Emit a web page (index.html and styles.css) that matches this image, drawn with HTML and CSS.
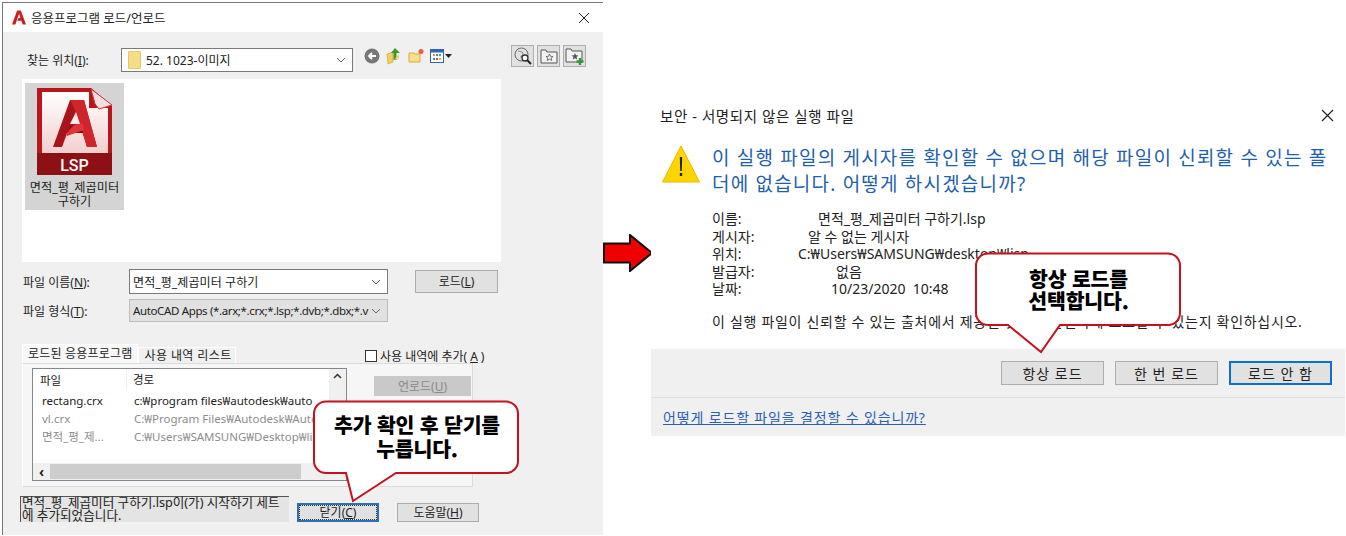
FILE: index.html
```html
<!DOCTYPE html>
<html lang="ko">
<head>
<meta charset="utf-8">
<title>응용프로그램 로드/언로드</title>
<link rel="stylesheet" href="styles.css">
</head>
<body>
<main class="canvas">
  <section class="win-left">
    <header class="titlebar">
      <svg class="app-logo" width="14" height="15" viewBox="0 0 15 16"><path d="M0 15.500 5.500 .5h4L15 15.500h-3.600L10 11.500H5.600L7 8.600h2L7.600 4 3.600 15.500z" fill="#c8201e"/></svg>
      <span>응용프로그램 로드/언로드</span>
      <svg class="close" width="12" height="12" viewBox="0 0 12 12"><path d="M1 1l10 10M11 1 1 11" stroke="#222" stroke-width="1" fill="none"/></svg>
    </header>
    <div class="left-body">
      <div class="look-row">
        <label class="look-label">찾는 위치(<u>I</u>):</label>
        <div class="combo look-combo">
          <span class="mini-folder"></span><span>52. 1023-이미지</span>
          <svg class="chev" width="10" height="6" viewBox="0 0 10 6"><path d="M1 1l4 4 4-4" stroke="#666" fill="none"/></svg>
        </div>
        <div class="tools">
          <svg width="16" height="16" viewBox="0 0 16 16"><circle cx="8" cy="8" r="7.500" fill="#777"/><path d="M12 8H6M8 5 5 8l3 3" stroke="#fff" stroke-width="2" fill="none"/></svg>
          <svg width="16" height="18" viewBox="0 0 16 18"><path d="M1 7l6-2v10l-5 2z" fill="#f4cf5c" stroke="#c79a2a" stroke-width=".6"/><path d="M9 1 5 6h2.500v7h3V6H14z" fill="#3b9a2b"/><path d="M8 13l5-2V8l-2 1z" fill="#f4cf5c"/></svg>
          <svg width="16" height="16" viewBox="0 0 16 16"><path d="M1 5h5l1 1h5v8H1z" fill="#fbe08a" stroke="#d9a93b"/><circle cx="13" cy="3.500" r="2.500" fill="#e8622c"/></svg>
          <span class="view-tool">
            <svg width="14" height="14" viewBox="0 0 14 14"><rect x=".5" y=".5" width="13" height="13" fill="#fff" stroke="#2b66b8"/><rect x="1" y="1" width="12" height="2.500" fill="#2b66b8"/><path d="M3 5h2v2H3z" fill="#e2883a"/><path d="M6 5h2v2H6z" fill="#3e7fc8"/><path d="M9 5h2v2H9z" fill="#5aa54a"/><path d="M3 9h2v2H3z" fill="#3e7fc8"/><path d="M6 9h2v2H6z" fill="#d94b3b"/><path d="M9 9h2v2H9z" fill="#e2b83a"/></svg>
            <svg width="7" height="4" viewBox="0 0 7 4"><path d="M0 0h7L3.500 4z" fill="#222"/></svg>
          </span>
        </div>
        <div class="fav-tools">
          <span class="tool-btn"><svg width="18" height="18" viewBox="0 0 18 18"><circle cx="7.500" cy="7.500" r="6.500" fill="#dfe3e6" stroke="#666"/><path d="M4 4c2 1 4 0 5 2s-3 2-2 5" stroke="#888" fill="none"/><circle cx="11" cy="11" r="3" fill="#fff" stroke="#333" stroke-width="1.300"/><path d="M13 13l4 4" stroke="#222" stroke-width="2"/></svg></span>
          <span class="tool-btn"><svg width="18" height="16" viewBox="0 0 18 16"><path d="M1 2h5l1 2h10v11H1z" fill="#f2f2f2" stroke="#555"/><path d="M9.500 6l1 2.300 2.500.2-1.900 1.600.6 2.400-2.200-1.300-2.200 1.300.6-2.400L6 8.500l2.500-.2z" fill="none" stroke="#555" stroke-width=".8"/></svg></span>
          <span class="tool-btn"><svg width="20" height="19" viewBox="0 0 20 19"><path d="M1 2h5l1 2h10v11H1z" fill="#f2f2f2" stroke="#555"/><path d="M10 6l1 2.300 2.500.2-1.900 1.600.6 2.400-2.200-1.300-2.200 1.300.6-2.400-1.900-1.600 2.500-.2z" fill="#556"/><path d="M15 11v7M11.500 14.500h7" stroke="#2f9a35" stroke-width="2.400"/></svg></span>
        </div>
      </div>

      <div class="file-panel">
        <figure class="tile">
          <svg class="lsp" width="75" height="88" viewBox="0 0 75 88">
            <defs><linearGradient id="pg" x1="0" y1="0" x2="0" y2="1"><stop offset="0" stop-color="#fff"/><stop offset="1" stop-color="#f3cfcf"/></linearGradient></defs>
            <path d="M0 0H54L75 18V87H0z" fill="#b8161b"/>
            <path d="M5 4H52V20H71V65H5z" fill="url(#pg)"/>
            <path d="M54 1 58 16 62 21 75 17z" fill="#f6dfe0" stroke="#c5383b"/>
            <path d="M0 65H75V87H0z" fill="#8c1014"/>
            <path d="M16 59 33 12H47L60 59H50L46 45H30L25 59z" fill="#a81419"/>
            <path d="M33 12H47L60 59H50L38 22z" fill="#d0262b"/>
            <path d="M25 59 33 38H44L46 45H30z" fill="#7c0f13"/>
            <path d="M30 45C36 36 42 34 46 36L47 42 30 48z" fill="#e0343a"/>
            <path d="M33 36 39 24 43 36z" fill="#fbeaea"/>
            <text x="37.500" y="83" class="lsp-text" text-anchor="middle">LSP</text>
          </svg>
          <figcaption>면적_평_제곱미터<br>구하기</figcaption>
        </figure>
      </div>

      <div class="form-row name-row">
        <label>파일 이름(<u>N</u>):</label>
        <div class="combo field"><span>면적_평_제곱미터 구하기</span><svg class="chev" width="10" height="6" viewBox="0 0 10 6"><path d="M1 1l4 4 4-4" stroke="#666" fill="none"/></svg></div>
        <button class="btn load-btn">로드(<u>L</u>)</button>
      </div>
      <div class="form-row type-row">
        <label>파일 형식(<u>T</u>):</label>
        <div class="combo field disabled"><span class="type-text">AutoCAD Apps (*.arx;*.crx;*.lsp;*.dvb;*.dbx;*.v</span><svg class="chev" width="10" height="6" viewBox="0 0 10 6"><path d="M1 1l4 4 4-4" stroke="#666" fill="none"/></svg></div>
      </div>

      <div class="loaded-area">
        <div class="tabs-col">
          <div class="tabs">
            <span class="tab active">로드된 응용프로그램</span>
            <span class="tab">사용 내역 리스트</span>
          </div>
          <div class="tab-pane">
            <div class="list">
              <div class="list-main">
                <div class="list-row head"><span class="c1">파일</span><span class="c2">경로</span></div>
                <div class="list-row"><span class="c1">rectang.crx</span><span class="c2">c:₩program files₩autodesk₩auto</span></div>
                <div class="list-row grey"><span class="c1">vl.crx</span><span class="c2">C:₩Program Files₩Autodesk₩AutoCAD</span></div>
                <div class="list-row grey"><span class="c1">면적_평_제...</span><span class="c2">C:₩Users₩SAMSUNG₩Desktop₩lisp</span></div>
                <div class="hscroll"><span class="arrow-l">‹</span><span class="thumb"></span></div>
              </div>
              <div class="vscroll"><svg width="9" height="6" viewBox="0 0 9 6"><path d="M1 5l3.500-3.500L8 5" stroke="#333" stroke-width="1.500" fill="none"/></svg></div>
            </div>
          </div>
        </div>
        <div class="side-col">
          <label class="check"><span class="box"></span>사용 내역에 추가(<u>A</u>)</label>
          <button class="btn unload" disabled>언로드(<u>U</u>)</button>
        </div>
      </div>

      <div class="bottom-row">
        <div class="status">면적_평_제곱미터 구하기.lsp이(가) 시작하기 세트<br>에 추가되었습니다.</div>
        <button class="btn close-btn">닫기(<u>C</u>)</button>
        <button class="btn help-btn">도움말(<u>H</u>)</button>
      </div>
    </div>
  </section>

  <svg class="big-arrow" width="50" height="38" viewBox="0 0 50 38"><path d="M1 9.500H27V1L49 19 27 37V28.500H1z" fill="#f00000" stroke="#111" stroke-width="2"/></svg>

  <section class="win-right">
    <header class="r-title">
      <span>보안 - 서명되지 않은 실행 파일</span>
      <svg width="13" height="13" viewBox="0 0 13 13"><path d="M1 1l11 11M12 1 1 12" stroke="#222" stroke-width="1.200" fill="none"/></svg>
    </header>
    <div class="r-main">
      <svg class="warn" width="38" height="38" viewBox="0 0 38 38"><path d="M19 1 37.500 37H.5z" fill="#ffd400" stroke="#e8b800"/><path d="M17.800 12h2.400l-.4 14h-1.600z" fill="#222"/><rect x="17.800" y="28" width="2.400" height="3" fill="#222"/></svg>
      <div class="r-content">
        <h1 class="r-head">이 실행 파일의 게시자를 확인할 수 없으며 해당 파일이 신뢰할 수 있는 폴<br>더에 없습니다. 어떻게 하시겠습니까?</h1>
        <dl class="info">
          <div><dt>이름:</dt><dd class="i1">면적_평_제곱미터 구하기.lsp</dd></div>
          <div><dt>게시자:</dt><dd class="i2">알 수 없는 게시자</dd></div>
          <div><dt>위치:</dt><dd class="i3">C:₩Users₩SAMSUNG₩desktop₩lisp</dd></div>
          <div><dt>발급자:</dt><dd class="i4">없음</dd></div>
          <div><dt>날짜:</dt><dd class="i5">10/23/2020&nbsp;&nbsp;10:48</dd></div>
        </dl>
        <p class="r-note">이 실행 파일이 신뢰할 수 있는 출처에서 제공된 것이며 안전하게 로드할 수 있는지 확인하십시오.</p>
      </div>
    </div>
    <div class="r-actions">
      <button class="btn r-btn">항상 로드</button>
      <button class="btn r-btn">한 번 로드</button>
      <button class="btn r-btn primary">로드 안 함</button>
    </div>
    <div class="r-foot"><a href="#">어떻게 로드할 파일을 결정할 수 있습니까?</a></div>
  </section>

  <div class="callout c-left">
    <svg width="208" height="106" viewBox="0 0 208 106"><path d="M14 1.500H194a12 12 0 0 1 12 12V61a12 12 0 0 1-12 12H84L41 101 34 73H14A12 12 0 0 1 2 61V13.500A12 12 0 0 1 14 1.500z" fill="#fff" stroke="#c8101c" stroke-width="2"/></svg>
    <p>추가 확인 후 닫기를<br>누릅니다.</p>
  </div>
  <div class="callout c-right">
    <svg width="208" height="104" viewBox="0 0 208 104"><path d="M14 1.500H194a12 12 0 0 1 12 12V61a12 12 0 0 1-12 12H86L67 100 34 73H14A12 12 0 0 1 2 61V13.500A12 12 0 0 1 14 1.500z" fill="#fff" stroke="#c8101c" stroke-width="2"/></svg>
    <p>항상 로드를<br>선택합니다.</p>
  </div>
</main>
</body>
</html>
```

FILE: styles.css
```css
* { box-sizing: border-box; }
html, body { margin: 0; padding: 0; background: #fff; }
body {
  width: 1346px;
  height: 536px;
  overflow: hidden;
  font-family: "Noto Sans", "Noto Sans CJK KR", sans-serif;
  font-size: 12px;
  color: #222;
}
.canvas { position: relative; width: 1346px; height: 536px; display: flex; align-items: flex-start; }
u { text-underline-offset: 1px; }
button { font-family: inherit; font-size: 12px; color: #222; padding: 0; }

/* Left dialog */
.win-left {
  flex: none;
  width: 601px;
  height: 533px;
  margin: 2px 0 0 2px;
  border-top: 1px solid #777;
  border-left: 1px solid #777;
  background: #f0f0f0;
}
.titlebar {
  height: 29px;
  background: #fff;
  display: flex;
  align-items: center;
  padding: 0 13px 0 9px;
  gap: 5px;
  font-size: 12.500px;
}
.titlebar .close { margin-left: auto; }
.left-body { padding: 0 0 0 19px; }

.look-row { display: flex; align-items: center; height: 47px; padding-top: 8px; }
.look-label { width: 99px; padding-left: 5px; }
.combo {
  display: flex;
  align-items: center;
  background: #fff;
  border: 1px solid #7a7a7a;
  position: relative;
}
.look-combo { width: 232px; height: 24px; padding-left: 6px; gap: 5px; }
.mini-folder { width: 13px; height: 18px; background: #f6dc84; border: 1px solid #e5c765; border-radius: 1px; }
.chev { position: absolute; right: 6px; top: 50%; margin-top: -3px; }
.tools { display: flex; align-items: center; gap: 6px; margin-left: 11px; width: 147px; margin-top: -7px; }
.view-tool { display: flex; align-items: center; gap: 1px; }
.fav-tools { display: flex; gap: 3px; margin-top: -7px; }
.tool-btn {
  width: 23px; height: 22px;
  background: #e1e1e1;
  border: 1px solid #adadad;
  display: flex; align-items: center; justify-content: center;
}

.file-panel { width: 479px; height: 183px; background: #fff; padding: 4px 3px; }
.tile { margin: 0; width: 99px; height: 127px; background: #d4d4d4; padding-top: 5px; text-align: center; }
.lsp { display: block; margin: 0 auto; }
.lsp-text { font-family: Roboto, "Noto Sans", sans-serif; font-weight: 500; font-size: 16px; fill: #fff; }
.tile figcaption { margin-top: 5px; font-size: 12.200px; line-height: 14px; white-space: nowrap; }

.form-row { display: flex; align-items: center; }
.form-row label { width: 107px; padding-left: 1px; }
.name-row { margin-top: 7px; height: 25px; }
.type-row { margin-top: 5px; height: 23px; }
.field { width: 259px; height: 100%; padding-left: 3px; white-space: nowrap; letter-spacing: .1px; }
.type-text { font-size: 11.500px; letter-spacing: -.36px; }
.field.disabled { background: #e1e1e1; border-color: #bdbdbd; }
.btn { background: #e1e1e1; border: 1px solid #adadad; }
.load-btn { width: 83px; height: 23px; margin-left: 27px; margin-top: -1px; }

.loaded-area { display: flex; margin-top: 22px; }
.tabs-col { width: 451px; }
.tabs { display: flex; height: 19px; align-items: flex-end; }
.tab { height: 16px; padding: 0 3px 0 5px; line-height: 15px; background: #f0f0f0; border: 1px solid #fff; border-bottom: 0; letter-spacing: .4px; }
.tab.active { height: 19px; line-height: 17px; padding: 0 5px; background: #f7f7f7; letter-spacing: .2px; }
.tab-pane { height: 124px; border: 1px solid #dcdcdc; background: #f6f6f6; padding: 4px 0 0 9px; border-left: 1px solid #fff; }
.list { width: 315px; height: 113px; border: 1px solid #828790; background: #fff; display: flex; overflow: hidden; }
.list-main { flex: 1; min-width: 0; position: relative; }
.list-row { display: flex; height: 18px; align-items: center; white-space: nowrap; font-size: 11.500px; }
.list-row.head { height: 22px; }
.c1 { width: 93px; padding-left: 9px; flex: none; }
.head .c1 { padding-left: 7px; }
.c2 { padding-left: 8px; }
.head .c2 { border-left: 1px solid #eee; height: 100%; line-height: 21px; padding-left: 6px; }
.grey { color: #8c8c8c; }
.hscroll { position: absolute; left: 0; right: 0; bottom: 0; height: 17px; background: #f0f0f0; display: flex; align-items: center; }
.arrow-l { width: 17px; text-align: center; font-weight: 700; font-size: 14px; line-height: 14px; }
.thumb { width: 251px; height: 15px; background: #cdcdcd; }
.vscroll { width: 17px; background: #f0f0f0; padding-top: 4px; }
.vscroll svg { display: block; margin: 0 auto; }
.side-col { padding-top: 3px; margin-left: -108px; width: 140px; }
.check { display: flex; align-items: center; height: 18px; gap: 3px; }
.box { width: 12px; height: 12px; background: #fff; border: 1px solid #333; }
.unload { display: block; width: 97px; height: 20px; margin: 11px 0 0 9px; background: #c9c9c9; border-color: #c9c9c9; color: #8a8a8a; }

.bottom-row { display: flex; margin-top: 9px; align-items: flex-start; }
.status {
  width: 269px; height: 26px; margin-left: -2px;
  background: #e4e4e4;
  border-top: 1px solid #555; border-left: 1px solid #555;
  font-size: 12.600px; line-height: 12.500px;
  padding-left: 1px;
  white-space: nowrap;
}
.close-btn { width: 82px; height: 19px; margin: 7px 0 0 8px; border: 2px solid #2a72b8; outline: 1px dotted #333; outline-offset: -3px; line-height: 13px; }
.help-btn { width: 82px; height: 19px; margin: 7px 0 0 18px; line-height: 15px; }

.big-arrow { flex: none; margin: 234px 0 0 0; }

/* Right dialog */
.win-right { flex: none; width: 694px; margin: 100px 0 0 -2px; background: #fff; }
.r-title { height: 31px; display: flex; align-items: center; justify-content: space-between; padding: 0 11px 0 9px; font-size: 14.500px; letter-spacing: .6px; }
.r-main { display: flex; padding: 14px 14px 0 11px; height: 218px; }
.warn { flex: none; margin-top: 0; }
.r-content { margin-left: 12px; flex: 1; min-width: 0; }
.r-head { margin: 0; font-weight: 400; font-size: 19px; line-height: 26px; color: #1f5fb0; letter-spacing: 1.200px; white-space: nowrap; }
.info { margin: 13px 0 0; font-size: 14px; line-height: 17.500px; }
.info div { display: flex; height: 17.500px; }
.info dt { width: 0; flex: none; white-space: nowrap; }
.info dd { margin: 0; white-space: nowrap; }
.i1 { padding-left: 106px; }
.i2 { padding-left: 96px; }
.i3 { padding-left: 86px; }
.i4 { padding-left: 124px; }
.i5 { padding-left: 119px; }
.r-note { margin: 15px 0 0; font-size: 14px; line-height: 18px; letter-spacing: .7px; white-space: nowrap; }
.r-actions {
  height: 49px; background: #f0f0f0;
  border-bottom: 1px solid #dfdfdf;
  display: flex; justify-content: flex-end; gap: 11px;
  padding: 12px 13px 0 0;
}
.r-btn { width: 103px; height: 24px; font-size: 14px; letter-spacing: 1px; }
.r-btn.primary { border: 2px solid #0a6fcf; }
.r-foot { height: 38px; background: #f0f0f0; padding: 9px 0 0 12px; }
.r-foot a { color: #2a5fb5; font-size: 14px; letter-spacing: .85px; text-decoration: underline; }

/* Callouts */
.callout { position: absolute; width: 208px; }
.callout svg { display: block; }
.callout p {
  position: absolute; left: 0; right: -2px; top: 13px; margin: 0;
  text-align: center;
  font-family: "Noto Sans CJK KR", sans-serif;
  font-weight: 900;
  font-size: 20.500px;
  line-height: 23.500px;
  letter-spacing: -.2px;
  color: #000;
}
.c-left { left: 312px; top: 400px; }
.c-right { left: 974px; top: 252px; }
.c-right p { top: 15px; line-height: 22px; right: -1px; }
```
